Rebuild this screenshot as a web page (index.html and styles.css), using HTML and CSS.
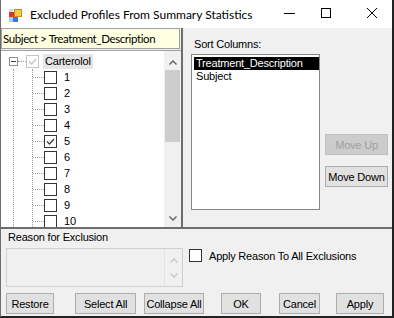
FILE: index.html
```html
<!DOCTYPE HTML>
<html>

<head>
    <meta charset="utf-8">
    <link rel="stylesheet" href="styles.css">
</head>

<body>
    <div class="window">
        <div class="titlebar">
            <svg class="app-icon" width="16" height="16" viewBox="0 0 16 16">
                <rect x="1" y="1" width="4" height="3" fill="#d8d8d8"/>
                <rect x="1" y="4" width="5" height="5" fill="#d9362b"/>
                <rect x="6.5" y="1.5" width="7" height="7" fill="#f7c948" stroke="#d08a1a"/>
                <rect x="1" y="9" width="4" height="5" fill="#a9c8ee"/>
                <rect x="5" y="9" width="5" height="5" fill="#3a78d8"/>
            </svg>
            <span class="title">Excluded Profiles From Summary Statistics</span>
            <div class="controls">
                <span class="ctl ctl-min">
                    <svg width="11" height="1" viewBox="0 0 11 1"><rect width="11" height="1" fill="#000"/></svg>
                </span>
                <span class="ctl ctl-max">
                    <svg width="10" height="10" viewBox="0 0 10 10"><rect x="0.5" y="0.5" width="9" height="9" fill="none" stroke="#000"/></svg>
                </span>
                <span class="ctl ctl-close">
                    <svg width="10" height="10" viewBox="0 0 10 10"><path d="M0 0L10 10M10 0L0 10" stroke="#000" stroke-width="1"/></svg>
                </span>
            </div>
        </div>

        <div class="main">
            <div class="left">
                <div class="path">Subject &gt; Treatment_Description</div>
                <div class="tree">
                    <div class="rows">
                        <div class="row root">
                            <span class="expander"><span class="minus"></span></span>
                            <span class="hconn root-conn"></span>
                            <span class="cb cb-grey">
                                <svg width="11" height="11" viewBox="0 0 11 11"><polyline points="2,5.5 4.5,8 9,3" fill="none" stroke="#c4c4c4" stroke-width="1.3"/></svg>
                            </span>
                            <span class="node-label">Carterolol</span>
                        </div>
                        <div class="branch">
                            <div class="children">
                                <div class="row"><span class="hconn"></span><span class="cb"></span><span class="item-label">1</span></div>
                                <div class="row"><span class="hconn"></span><span class="cb"></span><span class="item-label">2</span></div>
                                <div class="row"><span class="hconn"></span><span class="cb"></span><span class="item-label">3</span></div>
                                <div class="row"><span class="hconn"></span><span class="cb"></span><span class="item-label">4</span></div>
                                <div class="row"><span class="hconn"></span><span class="cb">
                                    <svg width="11" height="11" viewBox="0 0 11 11"><polyline points="2,5.5 4.5,8 9,3" fill="none" stroke="#3c3c3c" stroke-width="1.3"/></svg>
                                </span><span class="item-label">5</span></div>
                                <div class="row"><span class="hconn"></span><span class="cb"></span><span class="item-label">6</span></div>
                                <div class="row"><span class="hconn"></span><span class="cb"></span><span class="item-label">7</span></div>
                                <div class="row"><span class="hconn"></span><span class="cb"></span><span class="item-label">8</span></div>
                                <div class="row"><span class="hconn"></span><span class="cb"></span><span class="item-label">9</span></div>
                                <div class="row"><span class="hconn"></span><span class="cb"></span><span class="item-label">10</span></div>
                            </div>
                        </div>
                    </div>
                    <div class="vscroll">
                        <div class="sb-btn sb-up">
                            <svg width="8" height="5" viewBox="0 0 8 5"><polyline points="0.5,4.5 4,1 7.5,4.5" fill="none" stroke="#606060" stroke-width="1.4"/></svg>
                        </div>
                        <div class="sb-thumb"></div>
                        <div class="sb-track"></div>
                        <div class="sb-btn sb-down">
                            <svg width="8" height="5" viewBox="0 0 8 5"><polyline points="0.5,0.5 4,4 7.5,0.5" fill="none" stroke="#606060" stroke-width="1.4"/></svg>
                        </div>
                    </div>
                </div>
            </div>

            <div class="right">
                <div class="sort-label">Sort Columns:</div>
                <div class="sort-body">
                    <div class="listbox">
                        <div class="list-item selected">Treatment_Description</div>
                        <div class="list-item">Subject</div>
                    </div>
                    <div class="side-buttons">
                        <button class="btn btn-disabled move-up">Move Up</button>
                        <button class="btn move-down">Move Down</button>
                    </div>
                </div>
            </div>
        </div>

        <div class="bottom">
            <div class="reason-label">Reason for Exclusion</div>
            <div class="reason-row">
                <div class="reason-box">
                    <div class="reason-text"></div>
                    <div class="reason-scroll">
                        <svg width="8" height="5" viewBox="0 0 8 5"><polyline points="0.5,4.5 4,1 7.5,4.5" fill="none" stroke="#c8c8c8" stroke-width="1.4"/></svg>
                        <svg width="8" height="5" viewBox="0 0 8 5"><polyline points="0.5,0.5 4,4 7.5,0.5" fill="none" stroke="#c8c8c8" stroke-width="1.4"/></svg>
                    </div>
                </div>
                <label class="apply-all"><span class="cb"></span><span class="apply-text">Apply Reason To All Exclusions</span></label>
            </div>
            <div class="button-row">
                <button class="btn b-restore">Restore</button>
                <button class="btn b-select">Select All</button>
                <button class="btn b-collapse">Collapse All</button>
                <button class="btn b-ok">OK</button>
                <button class="btn b-cancel">Cancel</button>
                <button class="btn b-apply">Apply</button>
            </div>
        </div>
    </div>
</body>

</html>
```

FILE: styles.css
```css
* {
    box-sizing: border-box;
}
body {
    margin: 0;
    font-family: "Liberation Sans", Arial, sans-serif;
    font-size: 11px;
    letter-spacing: -0.2px;
    color: #000;
}
.window {
    width: 394px;
    height: 318px;
    background: #f0f0f0;
    border-left: 1px solid #6d6d6d;
    border-right: 2px solid #222;
    border-bottom: 2px solid #222;
    display: flex;
    flex-direction: column;
}

/* title bar */
.titlebar {
    height: 28px;
    flex-shrink: 0;
    background: #fff;
    display: flex;
    align-items: flex-start;
}
.app-icon {
    margin: 8px 0 0 7px;
}
.title {
    font-family: Lato, sans-serif;
    font-size: 12px;
    letter-spacing: 0;
    line-height: 16px;
    margin: 7px 0 0 6px;
}
.controls {
    margin-left: auto;
    display: flex;
    padding-top: 8px;
}
.ctl {
    display: flex;
    justify-content: center;
    height: 10px;
}
.ctl-min {
    width: 24px;
    align-items: center;
}
.ctl-max {
    width: 50px;
}
.ctl-close {
    width: 41px;
}

/* main split area */
.main {
    display: flex;
    height: 201px;
    flex-shrink: 0;
    border-bottom: 2px solid #6d6d6d;
}
.left {
    width: 182px;
    border-right: 2px solid #6d6d6d;
    display: flex;
    flex-direction: column;
}
.path {
    width: 179px;
    height: 21px;
    border: 1px solid #a0a0a0;
    background: #ffffe1;
    font-family: Lato, sans-serif;
    font-size: 11.5px;
    letter-spacing: -0.4px;
    line-height: 19px;
    padding-left: 1px;
    white-space: nowrap;
}
.tree {
    margin-top: 1px;
    height: 177px;
    border-top: 1px solid #a0a0a0;
    display: flex;
}
.rows {
    flex: 1;
    background: #fff;
    overflow: hidden;
    padding-top: 2px;
}
.row {
    height: 16px;
    display: flex;
    align-items: center;
}
.root {
    padding-left: 8px;
}
.expander {
    width: 9px;
    height: 9px;
    border: 1px solid #919191;
    background: #fff;
    display: flex;
    align-items: center;
    justify-content: center;
}
.minus {
    width: 5px;
    height: 1px;
    background: #404040;
}
.hconn {
    width: 11px;
    height: 0;
    border-top: 1px dotted #a0a0a0;
}
.root-conn {
    width: 8px;
}
.cb {
    width: 13px;
    height: 13px;
    border: 1px solid #333;
    background: #fff;
    display: flex;
    align-items: center;
    justify-content: center;
    flex-shrink: 0;
}
.cb-grey {
    border-color: #c4c4c4;
}
.node-label {
    margin-left: 4px;
    padding: 0 2px;
    line-height: 15px;
    background: #e5e5e5;
}
.item-label {
    margin-left: 7px;
}
.branch {
    margin-left: 12px;
    border-left: 1px dotted #a0a0a0;
}
.children {
    margin-left: 18px;
    border-left: 1px dotted #a0a0a0;
}
.vscroll {
    width: 17px;
    background: #f0f0f0;
    display: flex;
    flex-direction: column;
}
.sb-btn {
    display: flex;
    align-items: center;
    justify-content: center;
}
.sb-up {
    height: 19px;
    padding-top: 3px;
}
.sb-down {
    height: 17px;
}
.sb-thumb {
    height: 72px;
    margin: 0 1px;
    background: #cdcdcd;
}
.sb-track {
    flex: 1;
}

/* sort columns */
.right {
    flex: 1;
    padding: 10px 0 0 8px;
}
.sort-label {
    margin-left: 3px;
    line-height: 13px;
    margin-bottom: 3px;
}
.sort-body {
    display: flex;
    align-items: flex-start;
}
.listbox {
    width: 129px;
    height: 156px;
    border: 1px solid #828790;
    background: #fff;
    padding: 2px 0 0 2px;
}
.list-item {
    line-height: 13px;
    padding-left: 2px;
    white-space: nowrap;
}
.list-item.selected {
    background: #000;
    color: #fff;
}
.side-buttons {
    margin: 80px 0 0 5px;
    display: flex;
    flex-direction: column;
}
.btn {
    height: 21px;
    padding: 0;
    font-family: "Liberation Sans", Arial, sans-serif;
    font-size: 11px;
    letter-spacing: -0.2px;
    color: #000;
    background: #e1e1e1;
    border: 1px solid #adadad;
    white-space: nowrap;
}
.btn-disabled {
    background: #cccccc;
    border-color: #bfbfbf;
    color: #a0a0a0;
}
.move-up,
.move-down {
    width: 63px;
}
.move-down {
    margin-top: 11px;
}

/* bottom panel */
.bottom {
    flex: 1;
    padding: 2px 0 0 5px;
}
.reason-label {
    margin-left: 2px;
    line-height: 13px;
}
.reason-row {
    margin-top: 4px;
    display: flex;
    align-items: flex-start;
}
.reason-box {
    width: 177px;
    height: 39px;
    border: 1px solid #d0d0d0;
    background: #f0f0f0;
    display: flex;
}
.reason-text {
    flex: 1;
}
.reason-scroll {
    width: 18px;
    border-left: 1px solid #e3e3e3;
    display: flex;
    flex-direction: column;
    align-items: center;
    justify-content: space-around;
    padding: 4px 0 3px;
}
.apply-all {
    margin: 1px 0 0 6px;
    display: flex;
    align-items: center;
}
.apply-text {
    margin-left: 7px;
}
.button-row {
    margin-top: 6px;
    display: flex;
}
.b-restore { width: 48px; }
.b-select { width: 61px; margin-left: 21px; }
.b-collapse { width: 60px; margin-left: 8px; }
.b-ok { width: 40px; margin-left: 17px; }
.b-cancel { width: 41px; margin-left: 18px; }
.b-apply { width: 48px; margin-left: 16px; }
```
